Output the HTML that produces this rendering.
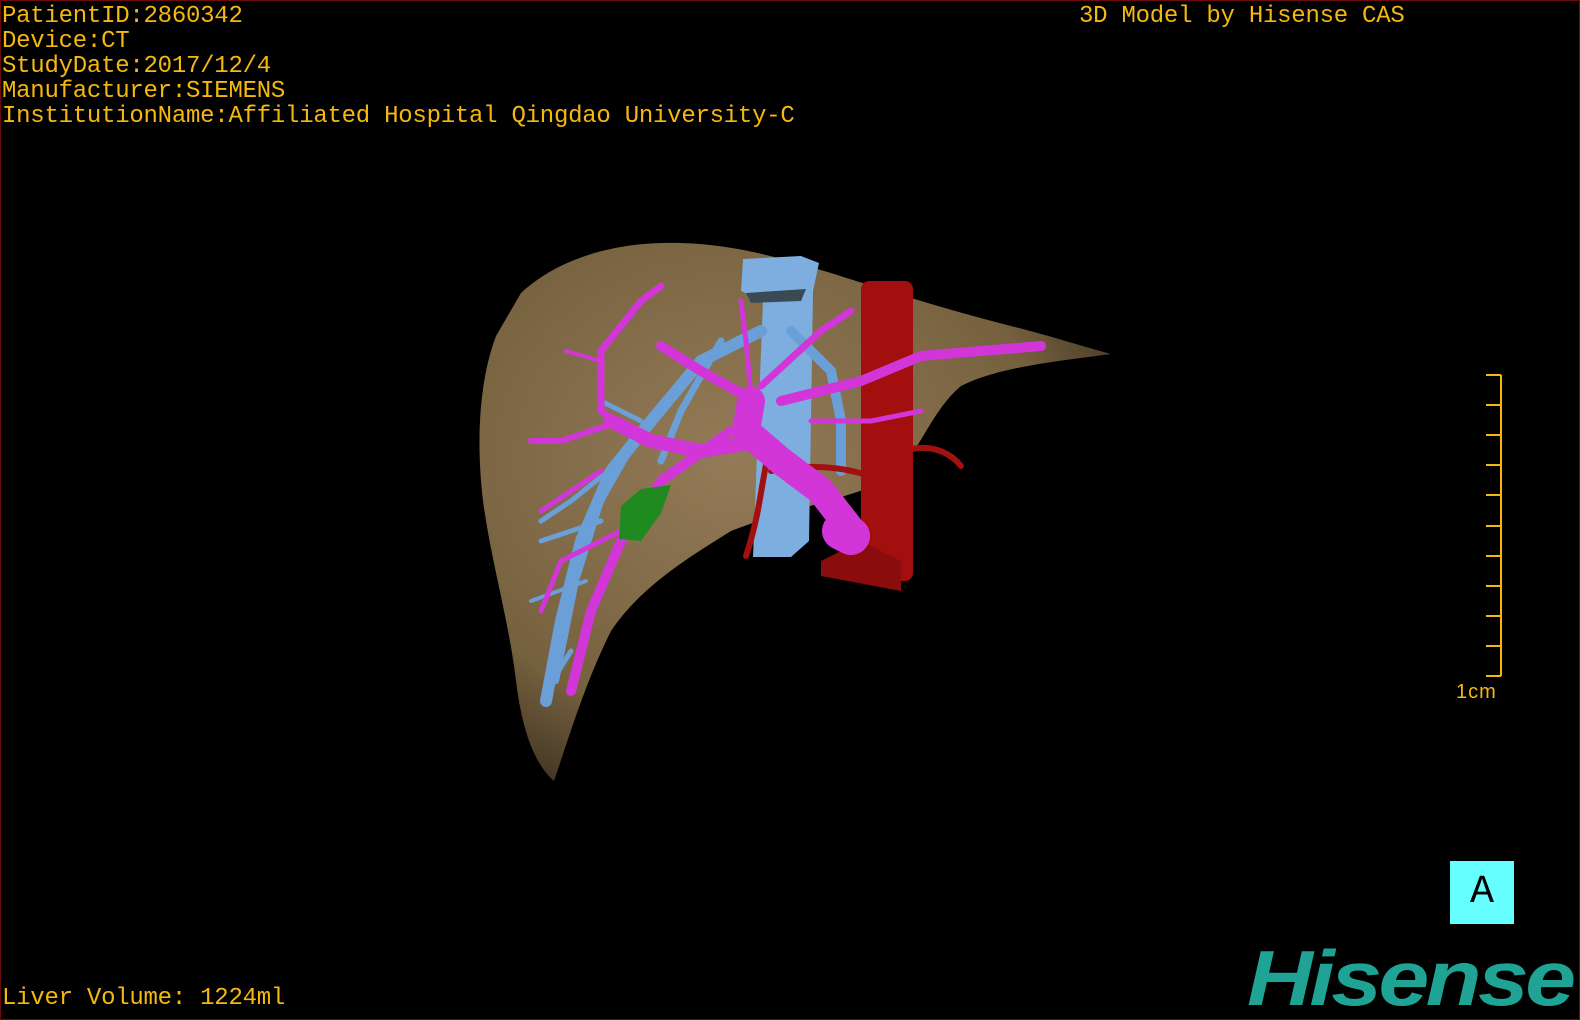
<!DOCTYPE html>
<html><head><meta charset="utf-8"><style>
html,body{margin:0;padding:0;background:#000;}
#s{position:relative;width:1580px;height:1020px;background:#000;overflow:hidden;box-sizing:border-box;border:1px solid #6a0a0a;}
.t{position:absolute;color:#f5b80f;font-family:"Liberation Mono",monospace;font-size:24px;line-height:25px;white-space:pre;letter-spacing:-0.25px;}
</style></head><body><div id="s">
<div class="t" style="left:1px;top:3px">PatientID:2860342
Device:CT
StudyDate:2017/12/4
Manufacturer:SIEMENS
InstitutionName:Affiliated Hospital Qingdao University-C</div>
<div class="t" style="left:1078px;top:3px">3D Model by Hisense CAS</div>
<div class="t" style="left:1px;top:985px">Liver Volume: 1224ml</div>
<svg width="1580" height="1020" style="position:absolute;left:0;top:0">
<defs>
<radialGradient id="lg" cx="0.4" cy="0.4" r="0.7"><stop offset="0" stop-color="#947b58"/><stop offset="0.7" stop-color="#76613f"/><stop offset="1" stop-color="#3a2f20"/></radialGradient>
</defs>
<path d="M520,292 C560,255 620,240 680,242 C740,244 780,258 830,272 C880,288 950,310 1010,325 C1050,335 1080,345 1110,353 C1060,360 1000,365 960,385 C930,410 920,450 890,478 C840,500 780,510 730,530 C690,555 640,585 610,630 C585,680 570,730 553,780 C530,760 520,720 515,680 C508,620 490,560 482,500 C475,440 478,380 495,335 Z" fill="url(#lg)"/>
<!-- IVC -->
<path d="M742,258 L800,255 L818,262 L812,290 L808,540 L790,556 L752,556 L762,300 L740,290 Z" fill="#7eaee0"/>
<path d="M745,292 L805,288 L800,300 L750,302 Z" fill="#3a4a55"/>
<g stroke="#6a9fd8" fill="none" stroke-linecap="round">
<path d="M760,330 L700,360 L650,420 L610,470 L580,540 L560,620 L545,700" stroke-width="12"/>
<path d="M640,430 L600,500 L575,580 L555,680" stroke-width="6"/>
<path d="M620,460 L570,500 L540,520" stroke-width="5"/>
<path d="M600,520 L540,540" stroke-width="5"/>
<path d="M585,580 L530,600" stroke-width="4"/>
<path d="M600,400 L640,420" stroke-width="5"/>
<path d="M790,330 L830,370 L840,420 L840,470" stroke-width="10"/>
<path d="M720,340 L680,410 L660,460" stroke-width="7"/>
<path d="M570,650 L545,690" stroke-width="5"/>
</g>
<rect x="860" y="280" width="52" height="300" rx="8" fill="#a30f0f"/>
<path d="M820,560 L860,540 L900,560 L900,590 L820,575 Z" fill="#8a0c0c"/>
<g stroke="#a31010" fill="none" stroke-width="6" stroke-linecap="round">
<path d="M880,470 C900,440 940,440 960,465"/>
<path d="M770,470 C820,460 860,470 880,480"/>
<path d="M770,440 C760,480 760,510 745,555"/>
</g>
<g stroke="#d236d8" fill="none" stroke-linecap="round" stroke-linejoin="round">
<path d="M855,535 L820,490 L780,460 L745,430 L750,400" stroke-width="28"/>
<path d="M840,530 L850,535" stroke-width="38"/>
<path d="M760,440 L700,450 L650,440 L610,420" stroke-width="14"/>
<path d="M745,395 L700,370 L660,345" stroke-width="10"/>
<path d="M760,385 L820,330 L850,310" stroke-width="7"/>
<path d="M780,400 L860,380 L920,355 L1040,345" stroke-width="10"/>
<path d="M730,430 L660,480 L620,540 L590,610 L570,690" stroke-width="10"/>
<path d="M640,440 L600,410 L600,350 L640,300 L660,285" stroke-width="7"/>
<path d="M620,420 L560,440 L530,440" stroke-width="6"/>
<path d="M600,360 L565,350" stroke-width="4"/>
<path d="M600,470 L540,510" stroke-width="5"/>
<path d="M810,420 L870,420 L920,410" stroke-width="5"/>
<path d="M750,395 L745,340 L740,300" stroke-width="5"/>
<path d="M620,530 L560,560 L540,610" stroke-width="5"/>
</g>
<path d="M640,488 L670,484 L660,512 L640,540 L618,538 L620,505 Z" fill="#1f8a1f"/>
<g stroke="#f5b80f" stroke-width="2">
<line x1="1500" y1="374" x2="1500" y2="675"/>
<line x1="1485" y1="374" x2="1500" y2="374"/><line x1="1485" y1="404" x2="1500" y2="404"/><line x1="1485" y1="434" x2="1500" y2="434"/><line x1="1485" y1="464" x2="1500" y2="464"/><line x1="1485" y1="494" x2="1500" y2="494"/><line x1="1485" y1="525" x2="1500" y2="525"/><line x1="1485" y1="555" x2="1500" y2="555"/><line x1="1485" y1="585" x2="1500" y2="585"/><line x1="1485" y1="615" x2="1500" y2="615"/><line x1="1485" y1="645" x2="1500" y2="645"/><line x1="1485" y1="675" x2="1500" y2="675"/>
</g>
<text x="1455" y="697" fill="#f5b80f" font-family="Liberation Sans,sans-serif" font-size="20" letter-spacing="1">1cm</text>
</svg>
<div style="position:absolute;left:1449px;top:860px;width:64px;height:63px;background:#66ffff;color:#000;font-family:'Liberation Mono',monospace;font-size:40px;line-height:63px;text-align:center">A</div>
<div style="position:absolute;left:1246px;top:937px;color:#1fa394;font-family:'Liberation Sans',sans-serif;font-weight:bold;font-style:italic;font-size:78px;line-height:80px;letter-spacing:-3px;transform:scaleX(1.17);transform-origin:left">Hisense</div>
</div></body></html>
